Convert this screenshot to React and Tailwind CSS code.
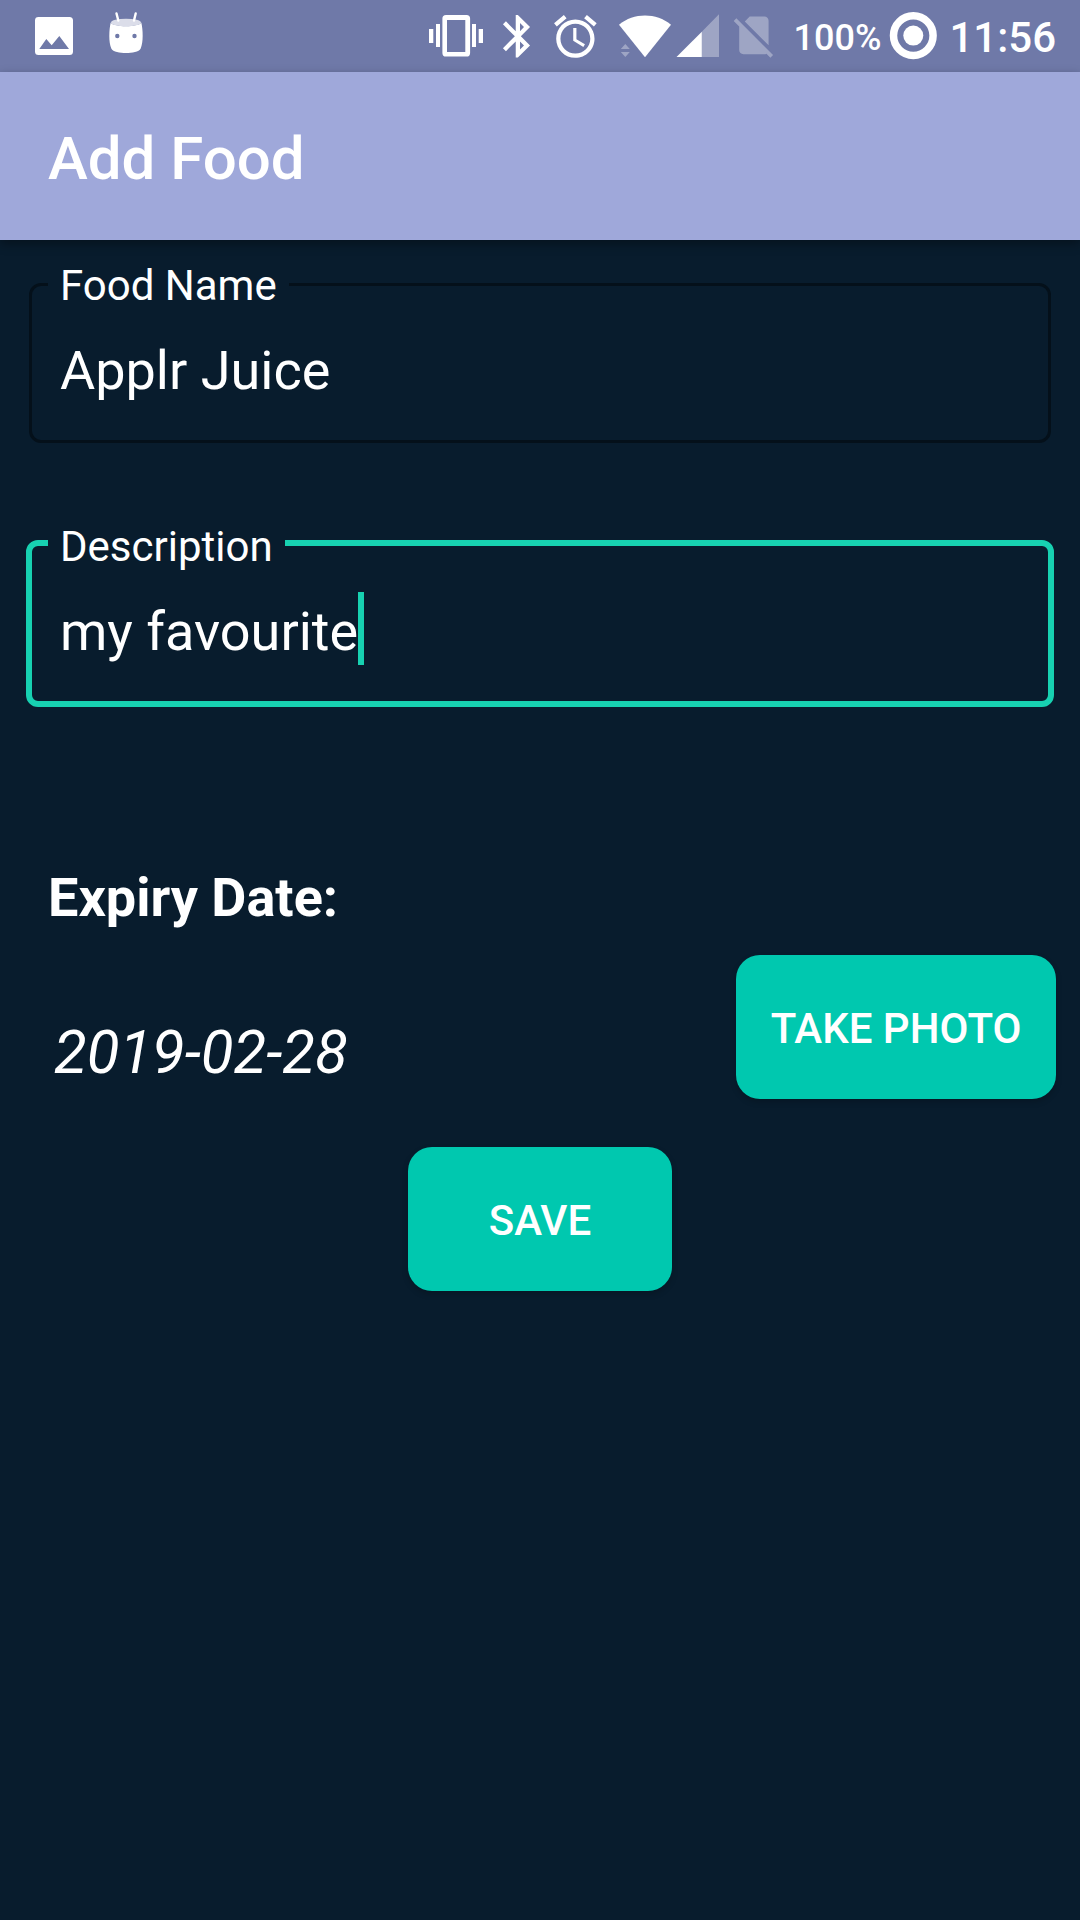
import { useState } from "react";

function PhotoIcon() {
  return (
    <svg viewBox="35 12 38 48" className="h-12 w-[38px]" aria-hidden="true">
      <path
        fill="#fff"
        fillRule="evenodd"
        d="M38.500 17h31a3.500 3.500 0 0 1 3.500 3.500v31a3.500 3.500 0 0 1-3.500 3.500h-31a3.500 3.500 0 0 1-3.500-3.500v-31a3.500 3.500 0 0 1 3.500-3.500zM39.300 49H69L59.300 36 51.700 45.300 46.300 39z"
      />
    </svg>
  );
}

function DroidIcon() {
  return (
    <svg viewBox="108 12 36 48" className="h-12 w-9" aria-hidden="true">
      <ellipse cx="126" cy="22.500" rx="15" ry="3.800" fill="#fff" opacity="0.75" />
      <path
        fill="#fff"
        fillRule="evenodd"
        d="M110.700 22.500C109 30 108.500 42 111.300 48.500C113 52 120 53 126 53C132 53 139 52 140.700 48.500C143.500 42 143 30 141.300 22.500C139 27.500 113 27.500 110.700 22.500zM117.300 33.800a2.200 2.200 0 1 0 0 4.400a2.200 2.200 0 0 0 0-4.400zM134.500 33.800a2.200 2.200 0 1 0 0 4.400a2.200 2.200 0 0 0 0-4.400z"
      />
      <path
        d="M116.500 13.500L118.300 20.500M135.700 13.500L134 20.500"
        stroke="#fff"
        strokeWidth="2.400"
        strokeLinecap="round"
      />
    </svg>
  );
}

function VibrateIcon() {
  return (
    <svg viewBox="430 12 56 48" className="h-12 w-14" fill="#fff" aria-hidden="true">
      <path d="M431 29h4.300v14H431zM438 24h4v23h-4zM474 24h4v23h-4zM480.700 29h4.300v14h-4.300z" />
      <path
        fillRule="evenodd"
        d="M448 15h20.500a3.600 3.600 0 0 1 3.600 3.600v34.300a3.600 3.600 0 0 1-3.600 3.600H448a3.600 3.600 0 0 1-3.600-3.600V18.600A3.600 3.600 0 0 1 448 15zM449 20v32h18.300V20z"
      />
    </svg>
  );
}

function BluetoothIcon() {
  return (
    <svg viewBox="504 12 30 48" className="h-12 w-[30px]" fill="#fff" aria-hidden="true">
      <g transform="translate(494.300 10.700) scale(2.130)">
        <path d="M17.710 7.710L12 2h-1v7.590L6.410 5 5 6.410 10.590 12 5 17.590 6.410 19 11 14.410V22h1l5.710-5.710-4.300-4.290 4.300-4.290zM13 5.830l1.880 1.880L13 9.590V5.830zm1.880 10.460L13 18.170v-3.760l1.880 1.880z" />
      </g>
    </svg>
  );
}

function AlarmIcon() {
  return (
    <svg viewBox="554 12 46 48" className="h-12 w-[46px]" fill="#fff" aria-hidden="true">
      <g transform="translate(551.800 11) scale(2.130)">
        <path d="M22 5.720l-4.600-3.860-1.290 1.530 4.600 3.860L22 5.720zM7.880 3.390L6.600 1.860 2 5.710l1.290 1.530 4.590-3.850zM12.500 8H11v6l4.750 2.850.75-1.230-4-2.370V8zM12 4c-4.970 0-9 4.030-9 9s4.020 9 9 9c4.970 0 9-4.030 9-9s-4.030-9-9-9zm0 16c-3.870 0-7-3.130-7-7s3.130-7 7-7 7 3.130 7 7-3.130 7-7 7z" />
      </g>
    </svg>
  );
}

function WifiIcon() {
  return (
    <svg viewBox="618 12 54 48" className="h-12 w-[54px]" fill="#fff" aria-hidden="true">
      <path d="M645 57.200L619 24.800C626.500 18.500 635.500 15.500 645 15.500S663.500 18.500 671 24.800z" />
      <path opacity="0.330" d="M620.800 49h9l-4.500-5zM620.800 52h9l-4.500 5z" />
    </svg>
  );
}

function SignalIcon() {
  return (
    <svg viewBox="676 12 44 48" className="h-12 w-11" fill="#fff" aria-hidden="true">
      <path opacity="0.330" d="M701.800 57V31.700L719 14.300V57z" />
      <path d="M676.500 57h25.300V31.700z" />
    </svg>
  );
}

function NoSimIcon() {
  return (
    <svg viewBox="733 12 42 48" className="h-12 w-[42px]" fill="#fff" aria-hidden="true">
      <g transform="translate(729.700 10.200) scale(2.100)" opacity="0.330">
        <path d="M18.990 5c0-1.100-.89-2-1.990-2h-7L7.660 5.340 19 16.680 18.990 5zM3.650 3.880L2.380 5.150 5 7.770V19c0 1.100.9 2 2 2h10.010c.35 0 .67-.1.960-.26l1.880 1.880 1.270-1.270L3.650 3.880z" />
      </g>
    </svg>
  );
}

function BatteryRingIcon() {
  return (
    <svg viewBox="889 12 48 48" className="size-12" aria-hidden="true">
      <circle cx="913.300" cy="35.600" r="19.800" fill="none" stroke="#fff" strokeWidth="7.500" />
      <circle cx="913.300" cy="35.600" r="10" fill="#fff" />
    </svg>
  );
}

function StatusBar() {
  return (
    <div className="flex h-18 items-center bg-[#6f79a8] pr-6 pl-[35px] font-medium">
      <PhotoIcon />
      <div className="ml-[35px]">
        <DroidIcon />
      </div>
      <div className="ml-auto flex items-center">
        <div className="flex items-center gap-5">
          <div className="flex items-center gap-[18px]">
            <VibrateIcon />
            <BluetoothIcon />
          </div>
          <AlarmIcon />
          <WifiIcon />
        </div>
        <div className="ml-1 flex items-center gap-3">
          <SignalIcon />
          <NoSimIcon />
        </div>
        <span className="mr-2 ml-5 pt-1 text-[36px] leading-[48px]">100%</span>
        <BatteryRingIcon />
        <span className="ml-3 pt-1 text-[42px] leading-[48px]">11:56</span>
      </div>
    </div>
  );
}

function FoodNameField({ value, onChange }) {
  return (
    <fieldset className="mx-[29px] rounded-xl border-3 border-[#04101a] px-4 pt-5 pb-9">
      <legend className="px-3 pt-1 text-[42px] leading-[50px]">
        <label htmlFor="food-name">Food Name</label>
      </legend>
      <input
        id="food-name"
        type="text"
        value={value}
        onChange={(e) => onChange(e.target.value)}
        className="block h-[73px] w-full bg-transparent px-3 pt-1.5 text-[54px] outline-none"
      />
    </fieldset>
  );
}

function DescriptionField({ value, onChange }) {
  return (
    <fieldset className="mx-[26px] rounded-xl border-6 border-[#17d1b1] px-4 pt-5 pb-9">
      <legend className="px-3 pt-2 text-[42px] leading-[50px]">
        <label htmlFor="description">Description</label>
      </legend>
      <div className="flex h-[73px] items-stretch pl-3">
        <input
          id="description"
          type="text"
          value={value}
          onChange={(e) => onChange(e.target.value)}
          className="field-sizing-content bg-transparent pt-1.5 text-[54px] caret-transparent outline-none"
        />
        <span className="w-1.5 bg-[#17d1b1]" aria-hidden="true" />
      </div>
    </fieldset>
  );
}

export default function App() {
  const [name, setName] = useState("Applr Juice");
  const [description, setDescription] = useState("my favourite");

  return (
    <div className="flex min-h-screen flex-col bg-[#081c2d] font-[Roboto,sans-serif] text-white">
      <StatusBar />
      <header className="flex h-42 items-center bg-[#9fa8da] px-12 pt-1.5 shadow-[0_4px_10px_rgba(0,0,0,0.35)]">
        <h1 className="text-[60px] font-medium">Add Food</h1>
      </header>
      <form className="flex flex-col pt-[17px]" onSubmit={(e) => e.preventDefault()}>
        <div className="flex flex-col gap-[71px]">
          <FoodNameField value={name} onChange={setName} />
          <DescriptionField value={description} onChange={setDescription} />
        </div>
        <h2 className="mt-[158px] px-12 text-[54px] leading-[65px] font-bold">Expiry Date:</h2>
        <div className="mt-[25px] flex items-center justify-between pr-6 pl-[54px]">
          <time dateTime="2019-02-28" className="pt-[52px] text-[60px] leading-[72px] italic">
            2019-02-28
          </time>
          <button
            type="button"
            className="h-36 w-80 rounded-3xl bg-[#00c8af] pt-0.5 text-[42px] font-medium shadow-[0_3px_6px_rgba(0,0,0,0.2)]"
          >
            TAKE PHOTO
          </button>
        </div>
        <button
          type="submit"
          className="mt-12 h-36 w-66 self-center rounded-3xl bg-[#00c8af] pt-0.5 text-[42px] font-medium shadow-[0_3px_6px_rgba(0,0,0,0.2)]"
        >
          SAVE
        </button>
      </form>
    </div>
  );
}
